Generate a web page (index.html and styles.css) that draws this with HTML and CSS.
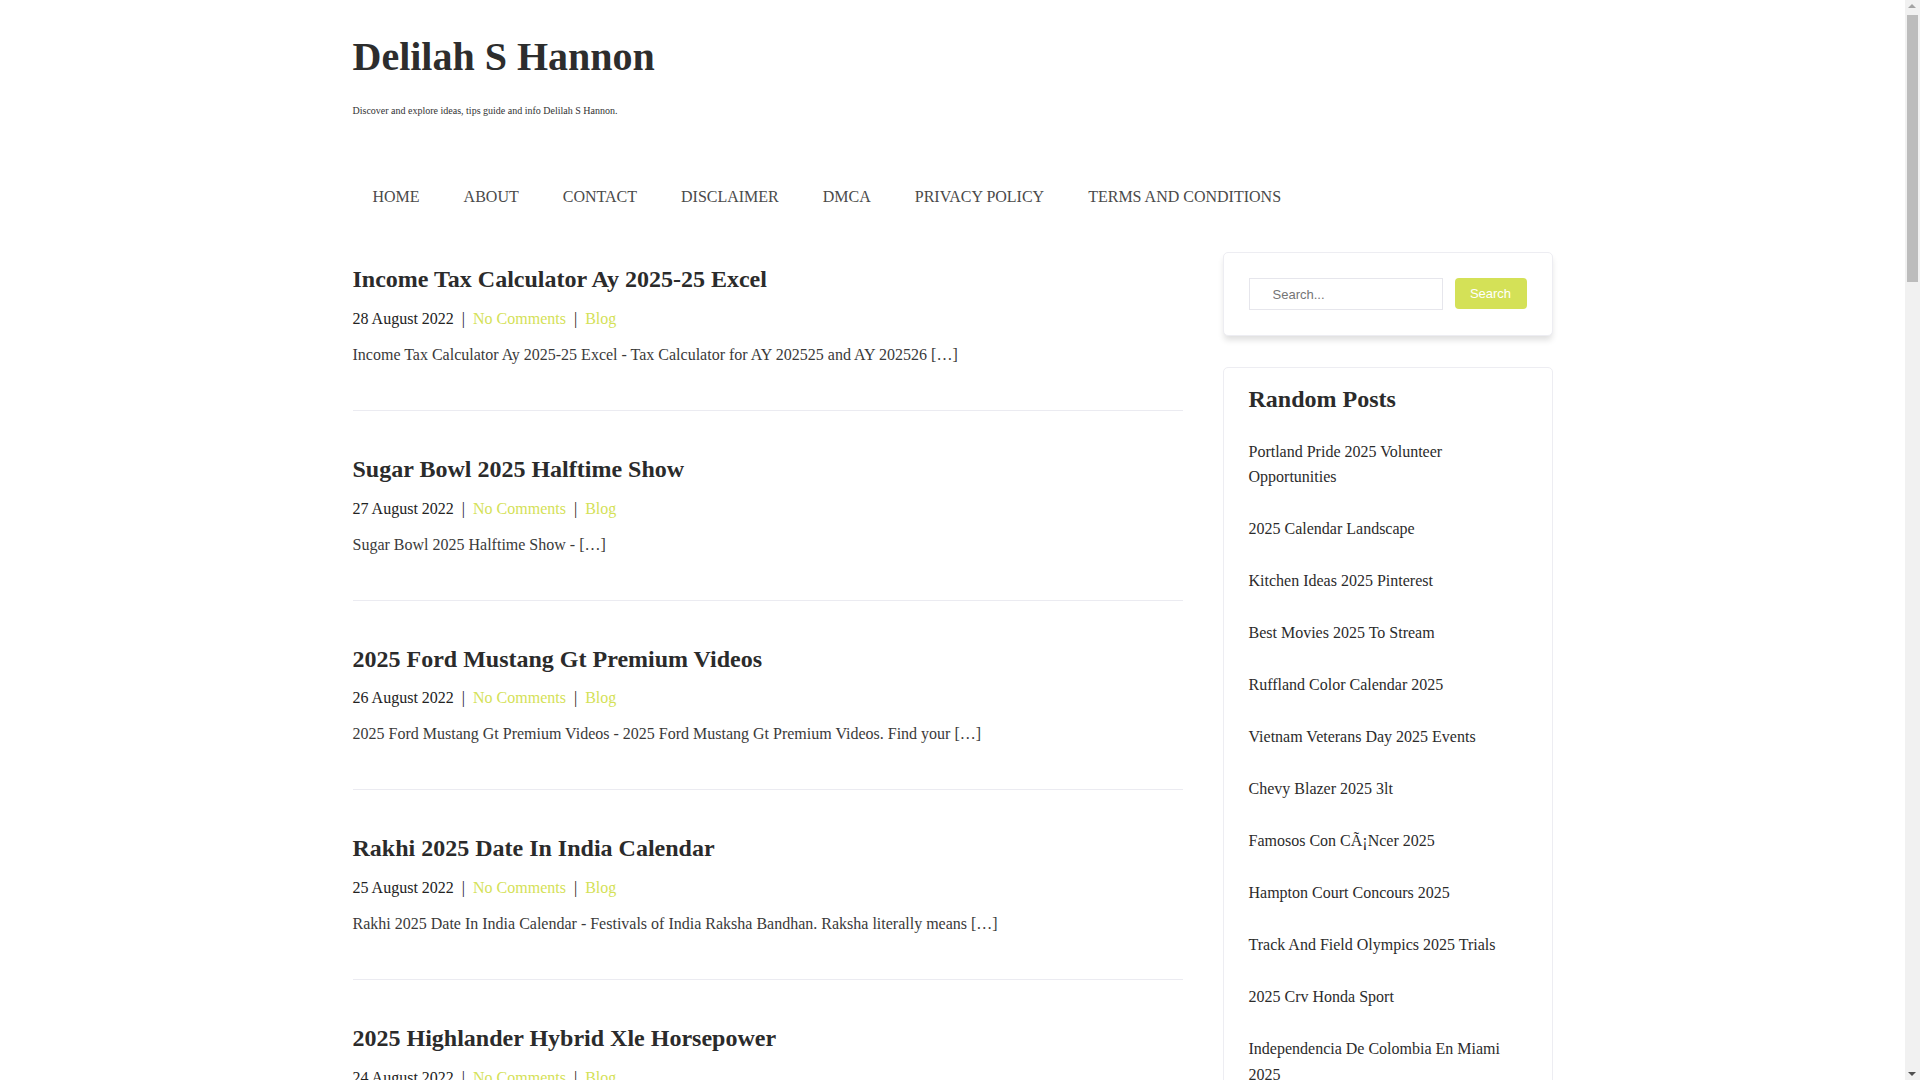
FILE: index.html
```html
<!DOCTYPE html>
<html lang="en">
<head>
<meta charset="utf-8">
<title>Delilah S Hannon</title>
<link rel="stylesheet" href="styles.css">
</head>
<body>
<div class="container">
  <header class="site-header">
    <h1 class="site-title">Delilah S Hannon</h1>
    <p class="tagline">Discover and explore ideas, tips guide and info Delilah S Hannon.</p>
    <nav class="main-nav">
      <ul>
        <li><a href="#">HOME</a></li>
        <li><a href="#">ABOUT</a></li>
        <li><a href="#">CONTACT</a></li>
        <li><a href="#">DISCLAIMER</a></li>
        <li><a href="#">DMCA</a></li>
        <li><a href="#">PRIVACY POLICY</a></li>
        <li><a href="#">TERMS AND CONDITIONS</a></li>
      </ul>
    </nav>
  </header>

  <div class="content">
    <main class="posts">
      <article class="post">
        <h2 class="post-title"><a href="#">Income Tax Calculator Ay 2025-25 Excel</a></h2>
        <div class="meta">28 August 2022<span class="sep">|</span><a href="#">No Comments</a><span class="sep">|</span><a href="#">Blog</a></div>
        <p class="excerpt">Income Tax Calculator Ay 2025-25 Excel - Tax Calculator for AY 202525 and AY 202526 […]</p>
      </article>
      <article class="post">
        <h2 class="post-title"><a href="#">Sugar Bowl 2025 Halftime Show</a></h2>
        <div class="meta">27 August 2022<span class="sep">|</span><a href="#">No Comments</a><span class="sep">|</span><a href="#">Blog</a></div>
        <p class="excerpt">Sugar Bowl 2025 Halftime Show - […]</p>
      </article>
      <article class="post">
        <h2 class="post-title"><a href="#">2025 Ford Mustang Gt Premium Videos</a></h2>
        <div class="meta">26 August 2022<span class="sep">|</span><a href="#">No Comments</a><span class="sep">|</span><a href="#">Blog</a></div>
        <p class="excerpt">2025 Ford Mustang Gt Premium Videos - 2025 Ford Mustang Gt Premium Videos. Find your […]</p>
      </article>
      <article class="post">
        <h2 class="post-title"><a href="#">Rakhi 2025 Date In India Calendar</a></h2>
        <div class="meta">25 August 2022<span class="sep">|</span><a href="#">No Comments</a><span class="sep">|</span><a href="#">Blog</a></div>
        <p class="excerpt">Rakhi 2025 Date In India Calendar - Festivals of India Raksha Bandhan. Raksha literally means […]</p>
      </article>
      <article class="post">
        <h2 class="post-title"><a href="#">2025 Highlander Hybrid Xle Horsepower</a></h2>
        <div class="meta">24 August 2022<span class="sep">|</span><a href="#">No Comments</a><span class="sep">|</span><a href="#">Blog</a></div>
        <p class="excerpt">2025 Highlander Hybrid Xle Horsepower - […]</p>
      </article>
      <article class="post">
        <h2 class="post-title"><a href="#">Portland Pride 2025 Volunteer Opportunities</a></h2>
        <div class="meta">23 August 2022<span class="sep">|</span><a href="#">No Comments</a><span class="sep">|</span><a href="#">Blog</a></div>
        <p class="excerpt">Portland Pride 2025 Volunteer Opportunities - […]</p>
      </article>
      <article class="post">
        <h2 class="post-title"><a href="#">2025 Calendar Landscape</a></h2>
        <div class="meta">22 August 2022<span class="sep">|</span><a href="#">No Comments</a><span class="sep">|</span><a href="#">Blog</a></div>
        <p class="excerpt">2025 Calendar Landscape - […]</p>
      </article>
      <article class="post">
        <h2 class="post-title"><a href="#">Kitchen Ideas 2025 Pinterest</a></h2>
        <div class="meta">21 August 2022<span class="sep">|</span><a href="#">No Comments</a><span class="sep">|</span><a href="#">Blog</a></div>
        <p class="excerpt">Kitchen Ideas 2025 Pinterest - […]</p>
      </article>
      <article class="post">
        <h2 class="post-title"><a href="#">Best Movies 2025 To Stream</a></h2>
        <div class="meta">20 August 2022<span class="sep">|</span><a href="#">No Comments</a><span class="sep">|</span><a href="#">Blog</a></div>
        <p class="excerpt">Best Movies 2025 To Stream - […]</p>
      </article>
      <article class="post">
        <h2 class="post-title"><a href="#">Ruffland Color Calendar 2025</a></h2>
        <div class="meta">19 August 2022<span class="sep">|</span><a href="#">No Comments</a><span class="sep">|</span><a href="#">Blog</a></div>
        <p class="excerpt">Ruffland Color Calendar 2025 - […]</p>
      </article>
      <article class="post">
        <h2 class="post-title"><a href="#">Vietnam Veterans Day 2025 Events</a></h2>
        <div class="meta">18 August 2022<span class="sep">|</span><a href="#">No Comments</a><span class="sep">|</span><a href="#">Blog</a></div>
        <p class="excerpt">Vietnam Veterans Day 2025 Events - […]</p>
      </article>
      <article class="post">
        <h2 class="post-title"><a href="#">Chevy Blazer 2025 3lt</a></h2>
        <div class="meta">17 August 2022<span class="sep">|</span><a href="#">No Comments</a><span class="sep">|</span><a href="#">Blog</a></div>
        <p class="excerpt">Chevy Blazer 2025 3lt - […]</p>
      </article>
      <article class="post">
        <h2 class="post-title"><a href="#">Hampton Court Concours 2025</a></h2>
        <div class="meta">16 August 2022<span class="sep">|</span><a href="#">No Comments</a><span class="sep">|</span><a href="#">Blog</a></div>
        <p class="excerpt">Hampton Court Concours 2025 - […]</p>
      </article>
      <article class="post">
        <h2 class="post-title"><a href="#">Track And Field Olympics 2025 Trials</a></h2>
        <div class="meta">15 August 2022<span class="sep">|</span><a href="#">No Comments</a><span class="sep">|</span><a href="#">Blog</a></div>
        <p class="excerpt">Track And Field Olympics 2025 Trials - […]</p>
      </article>
      <article class="post">
        <h2 class="post-title"><a href="#">2025 Crv Honda Sport</a></h2>
        <div class="meta">14 August 2022<span class="sep">|</span><a href="#">No Comments</a><span class="sep">|</span><a href="#">Blog</a></div>
        <p class="excerpt">2025 Crv Honda Sport - […]</p>
      </article>
      <article class="post">
        <h2 class="post-title"><a href="#">Independencia De Colombia En Miami 2025</a></h2>
        <div class="meta">13 August 2022<span class="sep">|</span><a href="#">No Comments</a><span class="sep">|</span><a href="#">Blog</a></div>
        <p class="excerpt">Independencia De Colombia En Miami 2025 - […]</p>
      </article>
      <article class="post">
        <h2 class="post-title"><a href="#">Famosos Con CÃ¡Ncer 2025</a></h2>
        <div class="meta">12 August 2022<span class="sep">|</span><a href="#">No Comments</a><span class="sep">|</span><a href="#">Blog</a></div>
        <p class="excerpt">Famosos Con CÃ¡Ncer 2025 - […]</p>
      </article>
      <article class="post">
        <h2 class="post-title"><a href="#">Income Tax Calculator Ay 2025-26 Excel</a></h2>
        <div class="meta">11 August 2022<span class="sep">|</span><a href="#">No Comments</a><span class="sep">|</span><a href="#">Blog</a></div>
        <p class="excerpt">Income Tax Calculator Ay 2025-26 Excel - […]</p>
      </article>
      <article class="post">
        <h2 class="post-title"><a href="#">2025 Calendar Printable With Holidays</a></h2>
        <div class="meta">10 August 2022<span class="sep">|</span><a href="#">No Comments</a><span class="sep">|</span><a href="#">Blog</a></div>
        <p class="excerpt">2025 Calendar Printable With Holidays - […]</p>
      </article>
      <article class="post">
        <h2 class="post-title"><a href="#">Best Cars Of 2025 Review</a></h2>
        <div class="meta">9 August 2022<span class="sep">|</span><a href="#">No Comments</a><span class="sep">|</span><a href="#">Blog</a></div>
        <p class="excerpt">Best Cars Of 2025 Review - […]</p>
      </article>
      <div class="pagination"><span class="current">1</span><a href="#">2</a><a href="#">3</a><a href="#">Next »</a></div>
    </main>

    <aside class="sidebar">
      <section class="widget search-widget">
        <form class="search-form">
          <input class="search-input" type="search" placeholder="Search...">
          <button class="search-button" type="button">Search</button>
        </form>
      </section>
      <section class="widget random-widget">
        <h3 class="widget-title">Random Posts</h3>
        <ul class="random-list">
          <li><a href="#">Portland Pride 2025 Volunteer Opportunities</a></li>
          <li><a href="#">2025 Calendar Landscape</a></li>
          <li><a href="#">Kitchen Ideas 2025 Pinterest</a></li>
          <li><a href="#">Best Movies 2025 To Stream</a></li>
          <li><a href="#">Ruffland Color Calendar 2025</a></li>
          <li><a href="#">Vietnam Veterans Day 2025 Events</a></li>
          <li><a href="#">Chevy Blazer 2025 3lt</a></li>
          <li><a href="#">Famosos Con CÃ¡Ncer 2025</a></li>
          <li><a href="#">Hampton Court Concours 2025</a></li>
          <li><a href="#">Track And Field Olympics 2025 Trials</a></li>
          <li><a href="#">2025 Crv Honda Sport</a></li>
          <li><a href="#">Independencia De Colombia En Miami 2025</a></li>
          <li><a href="#">Sugar Bowl 2025 Halftime Show</a></li>
          <li><a href="#">Rakhi 2025 Date In India Calendar</a></li>
          <li><a href="#">2025 Ford Mustang Gt Premium Videos</a></li>
        </ul>
      </section>
    </aside>
  </div>

  <footer class="site-footer">
    <p>Copyright © 2022 Delilah S Hannon</p>
  </footer>
</div>

<div class="scrollbar" aria-hidden="true">
  <span class="scroll-arrow up"></span>
  <span class="scroll-thumb"></span>
  <span class="scroll-arrow down"></span>
</div>
</body>
</html>
```

FILE: styles.css
```css
html, body {
  margin: 0;
  padding: 0;
  background: #ffffff;
}

body {
  font-family: "Liberation Serif", "Times New Roman", serif;
  font-size: 16px;
  color: #333333;
  padding-right: 15px;
}

a {
  text-decoration: none;
}

.container {
  width: 1200px;
  margin: 0 auto;
}

/* Header */
.site-header {
  padding-top: 33px;
}

.site-title {
  margin: 0;
  font-size: 40px;
  line-height: 48px;
  font-weight: 700;
  color: #2d2d2d;
}

.tagline {
  margin: 22px 0 0;
  font-size: 10px;
  line-height: 15px;
  color: #333333;
}

.main-nav {
  margin-top: 67px;
}

.main-nav ul {
  display: flex;
  gap: 4px;
  margin: 0;
  padding: 0;
  list-style: none;
}

.main-nav a {
  display: block;
  padding: 0 20px;
  font-size: 16px;
  line-height: 24px;
  color: #4a4a4a;
}

/* Content layout */
.content {
  display: grid;
  grid-template-columns: 830px 330px;
  gap: 40px;
  margin-top: 12px;
  align-items: start;
}

.post {
  padding: 44px 0 43px;
  border-bottom: 1px solid #ebebf1;
}

.post-title {
  margin: 0;
  font-size: 24px;
  line-height: 28.8px;
  font-weight: 700;
}

.post-title a {
  color: #2b2b2b;
}

.meta {
  margin-top: 13px;
  font-size: 16px;
  line-height: 24px;
  color: #222222;
}

.meta a {
  color: #d4e157;
}

.meta .sep {
  margin: 0 8px;
  color: #222222;
}

.excerpt {
  margin: 12px 0 0;
  font-size: 16px;
  line-height: 24px;
  color: #3a3a3a;
}

.pagination {
  display: flex;
  gap: 10px;
  padding: 40px 0;
}

.pagination a,
.pagination span {
  padding: 6px 12px;
  border: 1px solid #ebebf1;
  color: #333333;
}

.pagination .current {
  background: #d4e157;
  color: #ffffff;
  border-color: #d4e157;
}

/* Sidebar */
.sidebar {
  margin-top: 31px;
  display: flex;
  flex-direction: column;
  gap: 31px;
}

.widget {
  border: 1px solid #ededf2;
  border-radius: 5px;
  background: #ffffff;
}

.search-widget {
  padding: 25px;
  box-shadow: 0 5px 6px -1px rgba(0, 0, 0, 0.13);
}

.search-form {
  display: flex;
  align-items: flex-start;
  gap: 12px;
  margin: 0;
}

.search-input {
  flex: 1;
  min-width: 0;
  box-sizing: border-box;
  height: 32px;
  margin: 0;
  padding: 0 0 0 23px;
  border: 1px solid #e6e6ec;
  border-radius: 0;
  font-family: "Liberation Sans", Arial, sans-serif;
  font-size: 13px;
  color: #333333;
  background: #ffffff;
  outline: none;
}

.search-input::placeholder {
  color: #757575;
}

.search-button {
  box-sizing: border-box;
  width: 72px;
  height: 31px;
  margin: 0;
  padding: 0;
  border: none;
  border-radius: 4px;
  background: #d4e157;
  color: #ffffff;
  font-family: "Liberation Sans", Arial, sans-serif;
  font-size: 13px;
  line-height: 30px;
  cursor: pointer;
}

.random-widget {
  padding: 17px 25px 0;
}

.widget-title {
  margin: 0 0 25px;
  font-size: 24px;
  line-height: 28.8px;
  font-weight: 700;
  color: #2b2b2b;
}

.random-list {
  margin: 0;
  padding: 0;
  list-style: none;
}

.random-list li {
  margin-bottom: 26.4px;
  font-size: 16px;
  line-height: 25.6px;
}

.random-list a {
  color: #2b2b2b;
}

/* Footer */
.site-footer {
  padding: 60px 0 80px;
  text-align: center;
  font-size: 14px;
  color: #555555;
}

/* Browser scrollbar as shown in the screenshot */
.scrollbar {
  position: fixed;
  top: 0;
  right: 0;
  width: 15px;
  height: 100vh;
  background: #f1f1f1;
}

.scroll-thumb {
  position: absolute;
  top: 15px;
  left: 2px;
  width: 11px;
  height: 267px;
  background: #bcbcbc;
}

.scroll-arrow {
  position: absolute;
  left: 3px;
  width: 0;
  height: 0;
  border-left: 4.5px solid transparent;
  border-right: 4.5px solid transparent;
}

.scroll-arrow.up {
  top: 4px;
  border-bottom: 4px solid #a3a3a3;
}

.scroll-arrow.down {
  bottom: 4px;
  border-top: 4px solid #505050;
}
```
